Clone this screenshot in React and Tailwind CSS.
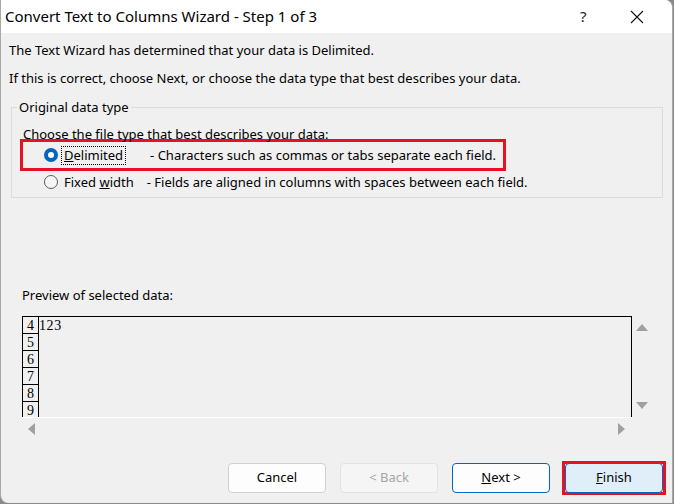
import React from 'react';

const font = { fontFamily: '"Segoe UI", "Noto Sans", sans-serif' };

function Radio({ checked }) {
  return checked ? (
    <span className="w-[14px] h-[14px] rounded-full bg-[#0067c0] flex items-center justify-center">
      <span className="w-[6px] h-[6px] rounded-full bg-white" />
    </span>
  ) : (
    <span className="w-[14px] h-[14px] rounded-full border border-[#5c5c5c] bg-[#f6f6f6]" />
  );
}

function Button({ children, variant }) {
  const styles = {
    normal: 'bg-[#fdfdfd] border-[#d0d0d0] text-black',
    disabled: 'bg-[#f5f5f5] border-[#e3e3e3] text-[#a6a6a6]',
    primary: 'bg-[#fdfdfd] border-[#0067c0] text-black',
    active: 'bg-[#e0eef9] border-[#0067c0] text-black',
  };
  return (
    <button className={`w-[98px] h-[30px] rounded-[4px] border text-[13px] ${styles[variant]}`}>
      {children}
    </button>
  );
}

const rows = ['4', '5', '6', '7', '8', '9'];

export default function App() {
  return (
    <div className="w-[674px] h-[504px] bg-[#8a8a8a]" style={font}>
      <div className="w-[673px] h-[503px] bg-[#f0f0f0] rounded-bl-[8px] rounded-tr-[8px] border-l border-r border-[#a8a8a8] overflow-hidden flex flex-col">
        {/* Title bar */}
        <div className="h-[33px] bg-white flex items-center shrink-0">
          <span className="pl-[4px] text-[15px] text-black flex-1">Convert Text to Columns Wizard - Step 1 of 3</span>
          <span className="w-[20px] text-[15px] text-[#222] mr-[30px]">?</span>
          <svg className="mr-[28px]" width="14" height="14" viewBox="0 0 14 14">
            <path d="M1 1 L13 13 M13 1 L1 13" stroke="#111" strokeWidth="1.1" />
          </svg>
        </div>

        {/* Body */}
        <div className="flex-1 flex flex-col px-[8px] text-[13px] text-black">
          <p className="mt-[9px] leading-[16px]">The Text Wizard has determined that your data is Delimited.</p>
          <p className="mt-[12px] leading-[16px]">If this is correct, choose Next, or choose the data type that best describes your data.</p>

          {/* Original data type group */}
          <div className="relative mt-[21px] ml-[2px] mr-[1px] h-[91px] border border-[#dcdcdc]">
            <span className="absolute left-[5px] top-[-9px] px-[2px] bg-[#f0f0f0] leading-[16px]">Original data type</span>
            <p className="mt-[18px] ml-[11px] leading-[16px]">Choose the file type that best describes your data:</p>
            <div className="-mt-[3px] ml-[8px] w-[486px] h-[32px] border-[3px] border-[#e81123] flex items-center">
              <div className="ml-[21px]"><Radio checked /></div>
              <span className="ml-[3px] px-[2px] h-[19px] leading-[17px] border border-dotted border-black"><u>D</u>elimited</span>
              <span className="ml-[24px] leading-[16px]">- Characters such as commas or tabs separate each field.</span>
            </div>
            <div className="ml-[32px] mt-[1px] flex items-center h-[20px]">
              <Radio />
              <span className="ml-[6px] leading-[16px]">Fixed <u>w</u>idth</span>
              <span className="ml-[13px] leading-[16px]">- Fields are aligned in columns with spaces between each field.</span>
            </div>
          </div>

          <p className="mt-[89px] ml-[13px] leading-[16px]">Preview of selected data:</p>

          {/* Preview */}
          <div className="mt-[13px] ml-[13px] flex">
            <div className="w-[610px] h-[101px] border-t border-l border-r border-black overflow-hidden">
              {rows.map((r) => (
                <div key={r} className="flex h-[17px]" style={{ fontFamily: '"Liberation Serif", serif' }}>
                  <span className="w-[16px] h-[17px] border-r border-b border-black text-[14px] leading-[17px] text-center">{r}</span>
                  <span className="text-[14px] leading-[17px] tracking-[0.6px]">{r === '4' ? '123' : ''}</span>
                </div>
              ))}
            </div>
            <div className="w-[24px] flex flex-col items-center justify-between pt-[8px] pb-[7px] -ml-[2px]">
              <svg width="12" height="8" viewBox="0 0 12 8"><path d="M6 0 L12 7 L0 7 Z" fill="#a0a0a0" /></svg>
              <svg width="12" height="8" viewBox="0 0 12 8"><path d="M0 0 L12 0 L6 7 Z" fill="#a0a0a0" /></svg>
            </div>
          </div>
          <div className="ml-[13px] w-[610px] h-[22px] border-t border-white flex items-center justify-between px-[6px]">
            <svg width="8" height="12" viewBox="0 0 8 12"><path d="M7 0 L7 12 L0 6 Z" fill="#a0a0a0" /></svg>
            <svg width="8" height="12" viewBox="0 0 8 12"><path d="M0 0 L7 6 L0 12 Z" fill="#a0a0a0" /></svg>
          </div>

          {/* Buttons */}
          <div className="mt-[24px] flex justify-end items-center gap-[14px] pr-[1px]">
            <Button variant="normal">Cancel</Button>
            <Button variant="disabled">&lt; Back</Button>
            <Button variant="primary"><u>N</u>ext &gt;</Button>
            <div className="ml-[-2px] -mr-[3px] -my-[2px] border-[3px] border-[#e81123] flex items-center h-[34px]">
              <Button variant="active"><u>F</u>inish</Button>
            </div>
          </div>
        </div>
      </div>
    </div>
  );
}
